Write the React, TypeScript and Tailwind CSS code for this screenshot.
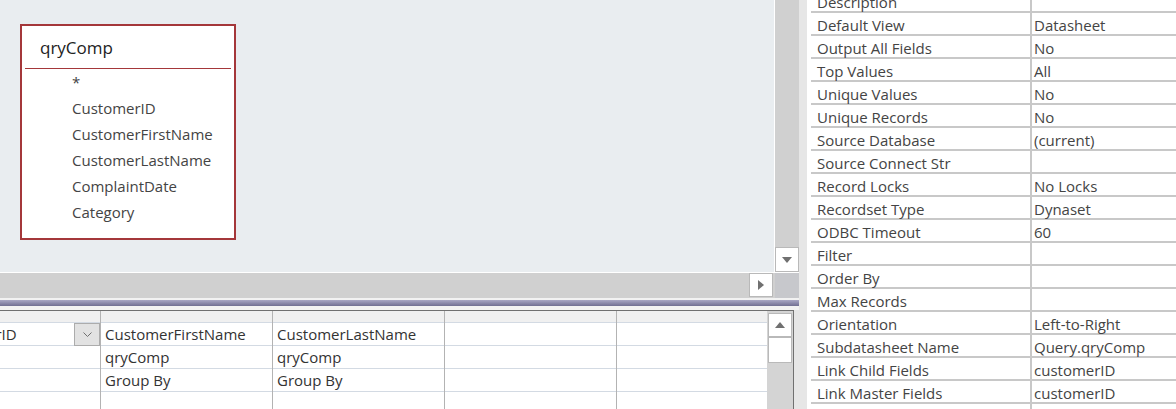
const fields = ['*', 'CustomerID', 'CustomerFirstName', 'CustomerLastName', 'ComplaintDate', 'Category'];

const columns = [
  { field: 'CustomerID', table: '', total: '', drop: true },
  { field: 'CustomerFirstName', table: 'qryComp', total: 'Group By' },
  { field: 'CustomerLastName', table: 'qryComp', total: 'Group By' },
  { field: '', table: '', total: '' },
  { field: '', table: '', total: '' },
];

const props: [string, string][] = [
  ['Description', ''],
  ['Default View', 'Datasheet'],
  ['Output All Fields', 'No'],
  ['Top Values', 'All'],
  ['Unique Values', 'No'],
  ['Unique Records', 'No'],
  ['Source Database', '(current)'],
  ['Source Connect Str', ''],
  ['Record Locks', 'No Locks'],
  ['Recordset Type', 'Dynaset'],
  ['ODBC Timeout', '60'],
  ['Filter', ''],
  ['Order By', ''],
  ['Max Records', ''],
  ['Orientation', 'Left-to-Right'],
  ['Subdatasheet Name', 'Query.qryComp'],
  ['Link Child Fields', 'customerID'],
  ['Link Master Fields', 'customerID'],
  ['', ''],
];

const Tri = ({ dir }: { dir: 'up' | 'down' | 'right' }) => {
  const pts = dir === 'up' ? '0,6 5,0 10,6' : dir === 'down' ? '0,0 10,0 5,6' : '0,0 6,5 0,10';
  const w = dir === 'right' ? 6 : 10;
  const h = dir === 'right' ? 10 : 6;
  return (
    <svg width={w} height={h} viewBox={`0 0 ${w} ${h}`}>
      <polygon points={pts} fill="#707070" />
    </svg>
  );
};

const App = () => {
  return (
    <div
      className="flex w-[1176px] h-[409px] overflow-hidden bg-[#e6e6e6] text-[#333]"
      style={{ fontFamily: '"Open Sans", sans-serif' }}
    >
      {/* left: query designer */}
      <div className="flex flex-col w-[807px] h-[409px] shrink-0 overflow-hidden">
        <div className="flex h-[272px] shrink-0">
          <div className="relative w-[775px] bg-[#e9edf0] border-r border-white">
            <div className="absolute left-[20px] top-[24px] w-[216px] h-[216px] border-2 border-[#a4373a] bg-white">
              <div className="h-[42px] flex items-center pl-[18px] pt-[2px] text-[17px] text-[#222]">qryComp</div>
              <div className="mx-[3px] h-px bg-[#a4373a]" />
              <div>
                {fields.map((f) => (
                  <div key={f} className="h-[26px] leading-[26px] pl-[50px] text-[15px] text-[#444]">
                    {f}
                  </div>
                ))}
              </div>
            </div>
          </div>
          <div className="w-[24px] bg-[#d0d0d0] flex flex-col justify-end">
            <div className="h-[25px] bg-white border border-[#b9b9b9] flex items-center justify-center">
              <Tri dir="down" />
            </div>
          </div>
        </div>
        <div className="flex h-[26px] w-[799px] shrink-0 border-t border-white">
          <div className="w-[775px] bg-[#d0d0d0] flex justify-end pr-[2px]">
            <div className="w-[24px] h-[24px] bg-white border border-[#b9b9b9] flex items-center justify-center">
              <Tri dir="right" />
            </div>
          </div>
          <div className="w-[24px] bg-[#c7c8cc]" />
        </div>
        <div className="w-[799px] h-[12px] shrink-0 flex flex-col">
          <div className="h-[2px] bg-[#f2f2f2]" />
          <div className="h-[6px] bg-gradient-to-b from-[#a9a7c5] to-[#716f92]" />
          <div className="h-[4px] bg-[#f2f2f2]" />
        </div>
        <div className="flex shrink-0 h-[110px] w-[794px] border-t border-r border-[#707070] bg-white">
          <div className="w-[767px] overflow-hidden">
            <div className="flex ml-[-71px]">
              {columns.map((c, i) => (
                <div key={i} className="w-[172px] h-[110px] shrink-0 border-r border-[#b3b3b3] text-[15px]">
                  <div className="h-[12px] bg-[#f0f0f0] border-b border-[#d3dae3]" />
                  <div className="relative h-[23px] border-b border-[#d3dae3] pl-[4px] leading-[22px] whitespace-nowrap">
                    {c.field}
                    {c.drop && (
                      <div className="absolute right-0 top-0 w-[26px] h-[23px] bg-[#e2e2e2] border border-[#acacac] flex items-center justify-center">
                        <svg width="9" height="5" viewBox="0 0 9 5">
                          <polyline points="0.5,0.5 4.5,4.5 8.5,0.5" fill="none" stroke="#707070" strokeWidth="1" />
                        </svg>
                      </div>
                    )}
                  </div>
                  <div className="h-[23px] border-b border-[#d3dae3] pl-[4px] leading-[22px] whitespace-nowrap">{c.table}</div>
                  <div className="h-[23px] border-b border-[#d3dae3] pl-[4px] leading-[22px] whitespace-nowrap">{c.total}</div>
                  <div className="h-[23px]" />
                </div>
              ))}
            </div>
          </div>
          <div className="w-[26px] bg-[#d4d4d4] pt-[2px] px-px flex flex-col">
            <div className="h-[24px] bg-white border border-[#b9b9b9] flex items-center justify-center">
              <Tri dir="up" />
            </div>
            <div className="h-[26px] bg-white border border-[#b9b9b9]" />
          </div>
        </div>
      </div>

      {/* right: property sheet */}
      <div className="flex-1 bg-white pl-[4px] overflow-hidden">
        <div className="mt-[-10px]">
          {props.map(([k, v], i) => (
            <div key={i} className="flex h-[23px] border-b-2 border-[#c8c8c8] text-[15px] text-[#444]">
              <div className="w-[221px] shrink-0 border-r-2 border-[#c8c8c8] pl-[6px] leading-[24px] whitespace-nowrap">{k}</div>
              <div className="pl-[2px] leading-[24px] whitespace-nowrap">{v}</div>
            </div>
          ))}
        </div>
      </div>
    </div>
  );
};

export default App;
